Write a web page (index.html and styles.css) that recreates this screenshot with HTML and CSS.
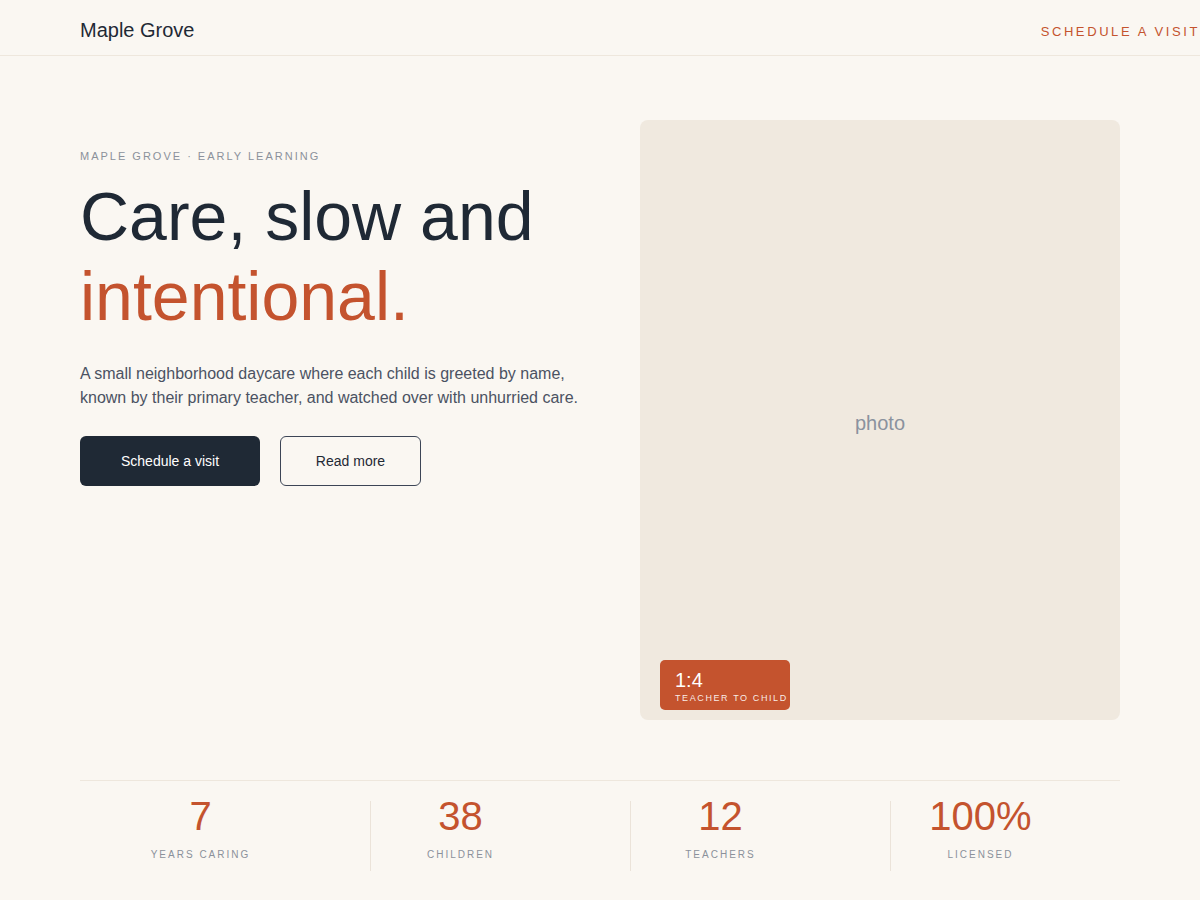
FILE: index.html
```html
<!DOCTYPE html>
<html lang="en">
<head>
<meta charset="utf-8">
<title>Maple Grove · Early Learning</title>
<link rel="stylesheet" href="styles.css">
</head>
<body>
  <header class="site-header">
    <a class="brand" href="#">Maple Grove</a>
    <a class="nav-cta" href="#">Schedule a visit</a>
  </header>

  <main class="page">
    <section class="hero">
      <div class="hero-copy">
        <p class="eyebrow">Maple Grove · Early Learning</p>
        <h1 class="headline">Care, slow and<br><span class="accent">intentional.</span></h1>
        <p class="lede">A small neighborhood daycare where each child is greeted by name, known by their primary teacher, and watched over with unhurried care.</p>
        <div class="actions">
          <a class="btn btn-solid" href="#">Schedule a visit</a>
          <a class="btn btn-outline" href="#">Read more</a>
        </div>
      </div>
      <figure class="photo">
        <span class="photo-label">photo</span>
        <div class="ratio-badge">
          <span class="ratio-value">1:4</span>
          <span class="ratio-caption">Teacher to child</span>
        </div>
      </figure>
    </section>

    <section class="stats">
      <div class="stat"><span class="stat-value">7</span><span class="stat-label">Years caring</span></div>
      <div class="stat"><span class="stat-value">38</span><span class="stat-label">Children</span></div>
      <div class="stat"><span class="stat-value">12</span><span class="stat-label">Teachers</span></div>
      <div class="stat"><span class="stat-value">100%</span><span class="stat-label">Licensed</span></div>
    </section>
  </main>
</body>
</html>
```

FILE: styles.css
```css
* { box-sizing: border-box; }

html, body {
  margin: 0;
  padding: 0;
}

body {
  background: #faf7f2;
  color: #1f2935;
  font-family: "Liberation Sans", Arial, sans-serif;
  overflow-x: hidden;
}

a { text-decoration: none; color: inherit; }

/* Top bar */
.site-header {
  height: 56px;
  display: flex;
  align-items: center;
  justify-content: space-between;
  padding: 0 0 0 80px;
  border-bottom: 1px solid #eee7dd;
}

.brand {
  font-size: 20px;
  color: #1f2935;
  margin-top: 5px;
}

.nav-cta {
  font-size: 13px;
  letter-spacing: 0.2em;
  text-transform: uppercase;
  color: #c4532e;
  margin-top: 8px;
  white-space: nowrap;
}

.page {
  padding: 0 80px;
}

/* Hero */
.hero {
  display: grid;
  grid-template-columns: 1fr 480px;
  column-gap: 40px;
  align-items: start;
  padding-top: 64px;
}

.hero-copy {
  padding-top: 28px;
}

.eyebrow {
  margin: 0;
  font-size: 11px;
  line-height: 16px;
  letter-spacing: 2px;
  text-transform: uppercase;
  color: #8b919b;
}

.headline {
  margin: 12px 0 0;
  font-size: 68px;
  line-height: 80px;
  font-weight: 400;
  color: #1f2935;
}

.accent { color: #c4532e; }

.lede {
  margin: 26px 0 0;
  font-size: 16px;
  line-height: 24px;
  color: #4b5262;
}

.actions {
  display: flex;
  gap: 20px;
  margin-top: 26px;
}

.btn {
  height: 50px;
  display: inline-flex;
  align-items: center;
  justify-content: center;
  border-radius: 6px;
  font-size: 14px;
}

.btn-solid {
  width: 180px;
  background: #1f2935;
  color: #ffffff;
}

.btn-outline {
  width: 141px;
  border: 1.5px solid #3c4556;
  color: #1f2935;
}

/* Photo placeholder */
.photo {
  position: relative;
  margin: 0;
  height: 600px;
  border-radius: 8px;
  background: #f0e9df;
  display: flex;
  align-items: center;
  justify-content: center;
}

.photo-label {
  font-size: 20px;
  color: #8a929e;
  margin-top: 6px;
}

.ratio-badge {
  position: absolute;
  left: 20px;
  bottom: 10px;
  width: 130px;
  height: 50px;
  padding: 8px 0 0 15px;
  border-radius: 5px;
  background: #c4532e;
  color: #ffffff;
  display: flex;
  flex-direction: column;
}

.ratio-value {
  font-size: 20px;
  line-height: 24px;
}

.ratio-caption {
  font-size: 9px;
  line-height: 12px;
  letter-spacing: 1.6px;
  white-space: nowrap;
  text-transform: uppercase;
  color: rgba(255, 255, 255, 0.9);
}

/* Figures row */
.stats {
  margin-top: 60px;
  border-top: 1px solid #eee7dd;
  padding-top: 20px;
  display: grid;
  grid-template-columns: repeat(4, 1fr);
}

.stat {
  margin-left: 30px;
  padding: 0 50px 0 0;
  border-left: 1px solid transparent;
  display: flex;
  flex-direction: column;
  align-items: center;
  height: 70px;
}

.stat + .stat {
  border-left-color: #ebe3d9;
}

.stat-value {
  font-size: 40px;
  line-height: 30px;
  color: #c4532e;
}

.stat-label {
  margin-top: 18px;
  font-size: 10px;
  line-height: 12px;
  letter-spacing: 2px;
  text-transform: uppercase;
  color: #8b919b;
}
```
